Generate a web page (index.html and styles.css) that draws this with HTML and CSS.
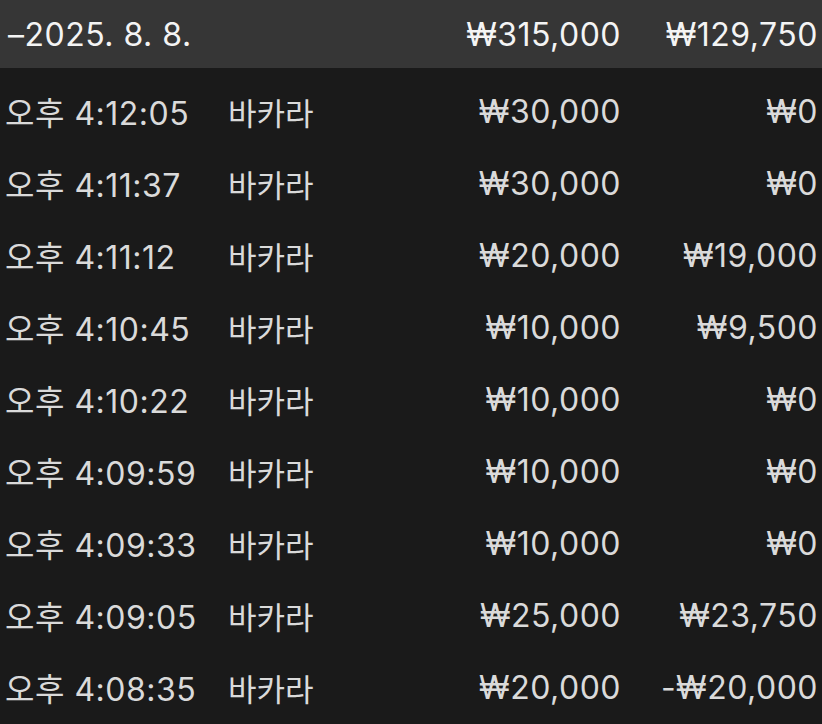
FILE: index.html
```html
<!DOCTYPE html>
<html lang="ko">
<head>
<meta charset="utf-8">
<link rel="stylesheet" href="styles.css">
</head>
<body>
<div class="table">
  <div class="head">
    <div class="date">–2025. 8. 8.</div>
    <div class="num">₩315,000</div>
    <div class="num">₩129,750</div>
  </div>
  <div class="rows">
    <div class="row"><div>오후 4:12:05</div><div>바카라</div><div class="num">₩30,000</div><div class="num">₩0</div></div>
    <div class="row"><div>오후 4:11:37</div><div>바카라</div><div class="num">₩30,000</div><div class="num">₩0</div></div>
    <div class="row"><div>오후 4:11:12</div><div>바카라</div><div class="num">₩20,000</div><div class="num">₩19,000</div></div>
    <div class="row"><div>오후 4:10:45</div><div>바카라</div><div class="num">₩10,000</div><div class="num">₩9,500</div></div>
    <div class="row"><div>오후 4:10:22</div><div>바카라</div><div class="num">₩10,000</div><div class="num">₩0</div></div>
    <div class="row"><div>오후 4:09:59</div><div>바카라</div><div class="num">₩10,000</div><div class="num">₩0</div></div>
    <div class="row"><div>오후 4:09:33</div><div>바카라</div><div class="num">₩10,000</div><div class="num">₩0</div></div>
    <div class="row"><div>오후 4:09:05</div><div>바카라</div><div class="num">₩25,000</div><div class="num">₩23,750</div></div>
    <div class="row"><div>오후 4:08:35</div><div>바카라</div><div class="num">₩20,000</div><div class="num">-₩20,000</div></div>
  </div>
</div>
</body>
</html>
```
FILE: styles.css
```css
html, body {
  margin: 0;
  padding: 0;
  background: #1a1a1a;
}
body {
  font-family: Inter, "Noto Sans CJK KR", sans-serif;
  font-size: 32px;
  letter-spacing: 0.5px;
  color: #dadada;
  width: 822px;
  height: 724px;
  overflow: hidden;
}
.head {
  display: grid;
  grid-template-columns: 1fr 200px 197px;
  align-items: center;
  height: 68px;
  background: #363636;
  color: #f4f4f4;
  padding: 0 4px 0 8px;
  box-sizing: border-box;
}
.rows {
  padding-top: 7px;
}
.row {
  display: grid;
  grid-template-columns: 223px 1fr 200px 197px;
  align-items: center;
  height: 72px;
  padding: 0 4px 0 5px;
  box-sizing: border-box;
}
.game {
  font-size: 31px;
}
.row > div:nth-child(2) {
  font-size: 31px;
  letter-spacing: 0;
}
.num {
  text-align: right;
}
```
